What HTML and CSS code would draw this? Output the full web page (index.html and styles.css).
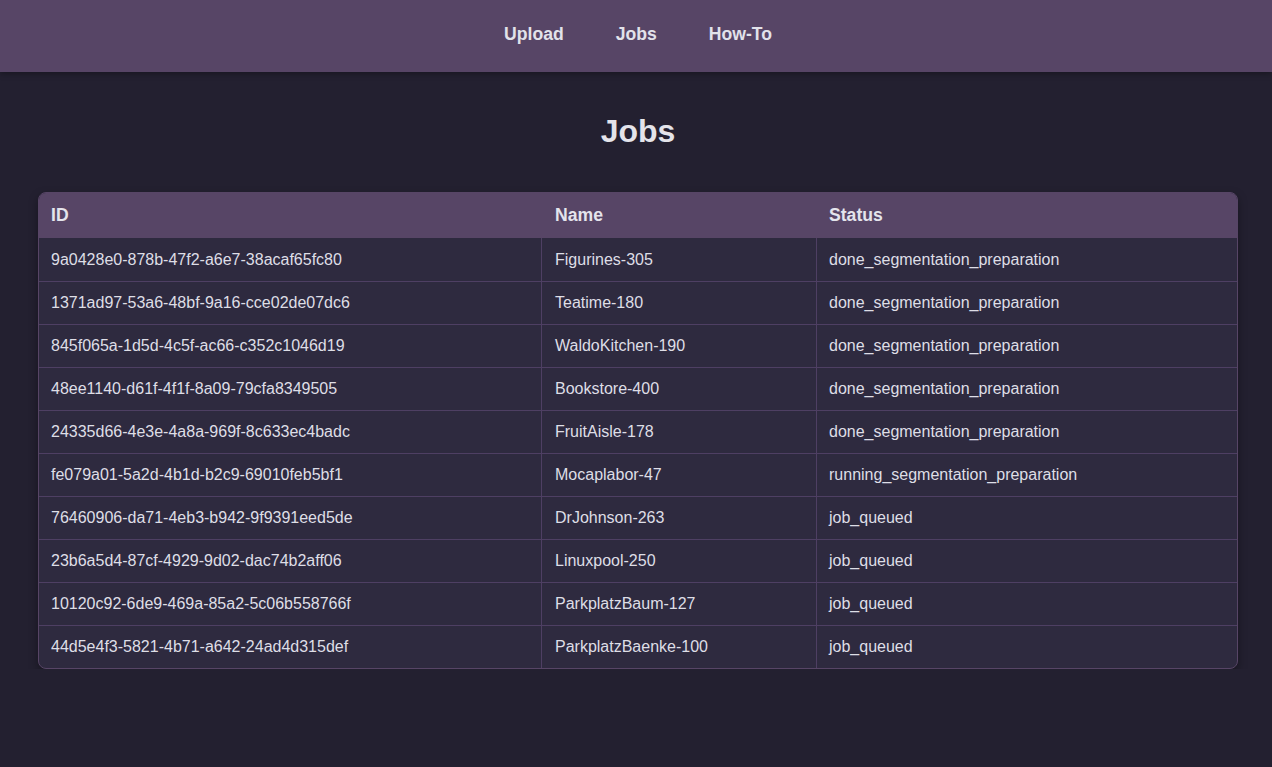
FILE: index.html
```html
<!DOCTYPE html>
<html lang="en">
<head>
<meta charset="utf-8">
<title>Jobs</title>
<link rel="stylesheet" href="styles.css">
</head>
<body>
<nav class="topnav">
  <a class="navlink" href="#">Upload</a>
  <a class="navlink" href="#">Jobs</a>
  <a class="navlink" href="#">How-To</a>
</nav>
<main class="content">
  <h1 class="title">Jobs</h1>
  <div class="tablewrap">
    <table class="jobs">
      <colgroup>
        <col class="c-id"><col class="c-name"><col class="c-status">
      </colgroup>
      <thead>
        <tr><th>ID</th><th>Name</th><th>Status</th></tr>
      </thead>
      <tbody>
        <tr><td>9a0428e0-878b-47f2-a6e7-38acaf65fc80</td><td>Figurines-305</td><td>done_segmentation_preparation</td></tr>
        <tr><td>1371ad97-53a6-48bf-9a16-cce02de07dc6</td><td>Teatime-180</td><td>done_segmentation_preparation</td></tr>
        <tr><td>845f065a-1d5d-4c5f-ac66-c352c1046d19</td><td>WaldoKitchen-190</td><td>done_segmentation_preparation</td></tr>
        <tr><td>48ee1140-d61f-4f1f-8a09-79cfa8349505</td><td>Bookstore-400</td><td>done_segmentation_preparation</td></tr>
        <tr><td>24335d66-4e3e-4a8a-969f-8c633ec4badc</td><td>FruitAisle-178</td><td>done_segmentation_preparation</td></tr>
        <tr><td>fe079a01-5a2d-4b1d-b2c9-69010feb5bf1</td><td>Mocaplabor-47</td><td>running_segmentation_preparation</td></tr>
        <tr><td>76460906-da71-4eb3-b942-9f9391eed5de</td><td>DrJohnson-263</td><td>job_queued</td></tr>
        <tr><td>23b6a5d4-87cf-4929-9d02-dac74b2aff06</td><td>Linuxpool-250</td><td>job_queued</td></tr>
        <tr><td>10120c92-6de9-469a-85a2-5c06b558766f</td><td>ParkplatzBaum-127</td><td>job_queued</td></tr>
        <tr><td>44d5e4f3-5821-4b71-a642-24ad4d315def</td><td>ParkplatzBaenke-100</td><td>job_queued</td></tr>
      </tbody>
    </table>
  </div>
</main>
</body>
</html>
```
FILE: styles.css
```css
* { box-sizing: border-box; }
html, body {
  margin: 0;
  padding: 0;
  background: #232030;
  color: #e0e0e6;
  font-family: "Liberation Sans", Arial, sans-serif;
}
.topnav {
  height: 72px;
  background: #574566;
  display: flex;
  justify-content: center;
  align-items: center;
  gap: 52px;
  padding-left: 4px;
  box-shadow: 0 2px 6px rgba(0,0,0,0.3);
}
.navlink {
  color: #e2e2ea;
  text-decoration: none;
  font-weight: bold;
  font-size: 17.6px;
  line-height: 20px;
  padding-bottom: 4px;
}
.content {
  padding: 0 34px 0 38px;
}
.title {
  margin: 41px 0 0;
  font-size: 32px;
  font-weight: bold;
  text-align: center;
  line-height: 37px;
  color: #e4e4ea;
}
.tablewrap {
  margin-top: 42px;
  width: 1200px;
  border-radius: 8px;
  overflow: hidden;
  border: 1px solid #574566;
  box-shadow: 0 4px 10px rgba(0,0,0,0.35);
  background: #2e2a3f;
}
.jobs {
  width: 100%;
  border-collapse: separate;
  border-spacing: 0;
  table-layout: fixed;
}
.c-id { width: 502px; }
.c-name { width: 275px; }
.c-status { width: auto; }
.jobs th {
  background: #574566;
  text-align: left;
  font-weight: bold;
  font-size: 17.6px;
  height: 45px;
  padding: 0 12px;
  color: #e4e4ec;
}
.jobs th:nth-child(2) { padding-left: 14px; }
.jobs th:nth-child(3) { padding-left: 13px; }
.jobs td {
  height: 43px;
  padding: 0 12px;
  font-size: 16px;
  color: #dedee6;
  border-top: 1px solid #4e3f63;
  border-left: 1px solid #4e3f63;
}
.jobs td:nth-child(2) { padding-left: 13px; }
.jobs td:first-child { border-left: none; }
.jobs tbody tr:first-child td { border-top: none; }
```
